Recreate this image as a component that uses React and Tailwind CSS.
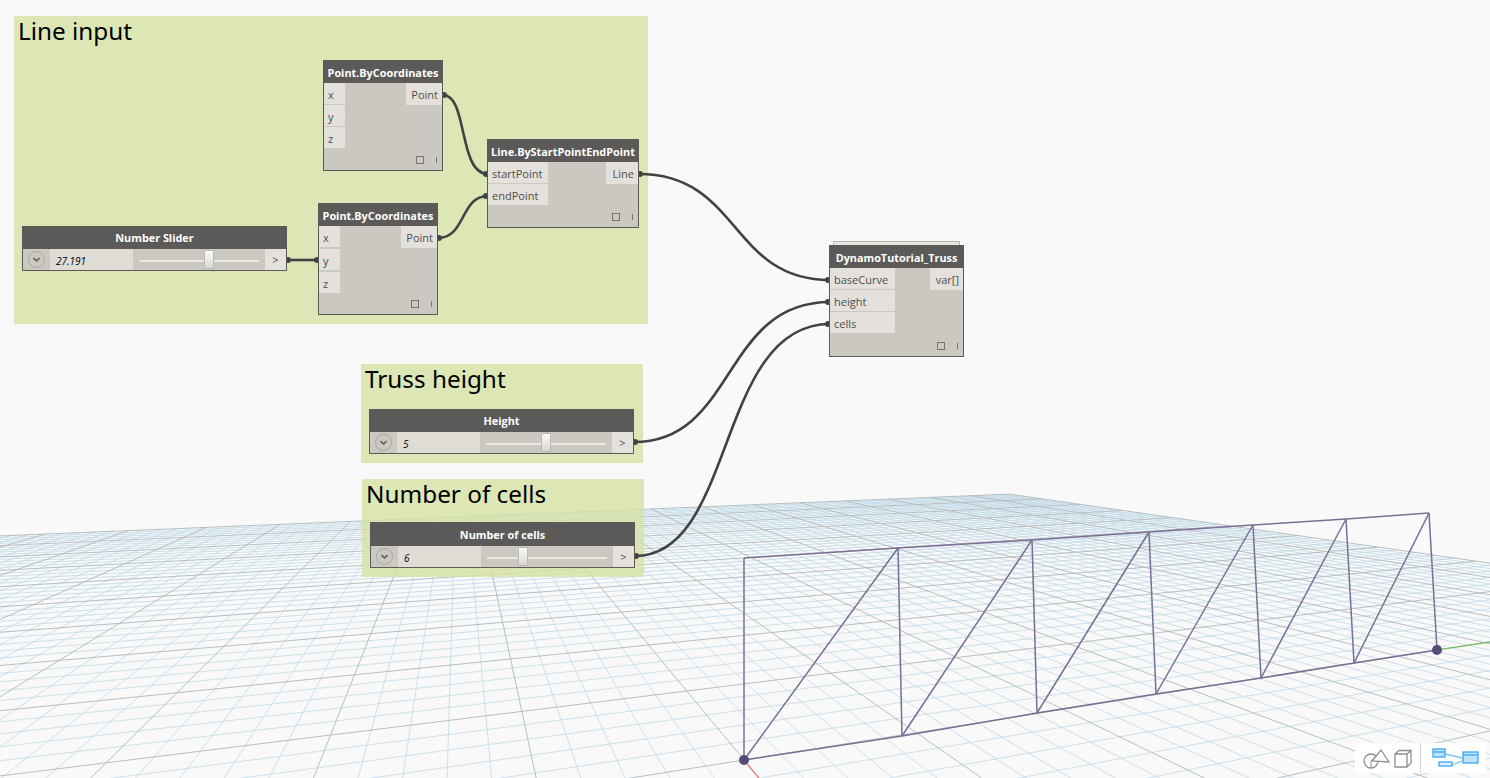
import React from 'react';

const G = 0.01721, H = 0.05, UMAX = 50, VMAX = 50;
function project(u, v) {
  const d = 1 + G * u + H * v;
  return [(G * 2918 * u + H * 458 * v + 744) / d, (G * 415 * u + H * 415 * v + 760) / d];
}
function gridLines() {
  const out = [];
  for (let k = -50; k <= 50; k++) {
    const u = k;
    const vmin = Math.max(-50, (0.04 - 1 - G * u) / H);
    if (vmin < VMAX) out.push({ a: project(u, vmin), b: project(u, VMAX), major: k % 5 === 0 });
    const v = k;
    const umin = Math.max(-50, (0.04 - 1 - H * v) / G);
    if (umin < UMAX) out.push({ a: project(umin, v), b: project(UMAX, v), major: k % 5 === 0 });
  }
  return out;
}

const bottom = [[744,760],[902,736],[1037,713],[1156,694],[1261,678],[1354,663],[1437,650]];
const top = [[744,558],[898,548],[1032,540],[1149,532],[1253,525],[1346,519],[1429,513]];

function Floor() {
  const lines = gridLines();
  const truss = [];
  bottom.forEach((p, i) => {
    truss.push([p, top[i]]);
    if (i < 6) {
      truss.push([p, bottom[i + 1]]);
      truss.push([top[i], top[i + 1]]);
      truss.push([p, top[i + 1]]);
    }
  });
  return (
    <svg className="absolute inset-0 blur-[0.45px]" width="1490" height="778" viewBox="0 0 1490 778">
      {lines.filter(l => !l.major).map((l, i) => (
        <line key={i} x1={l.a[0]} y1={l.a[1]} x2={l.b[0]} y2={l.b[1]} stroke="#c0d9e7" strokeWidth="0.8" />
      ))}
      {lines.filter(l => l.major).map((l, i) => (
        <line key={i} x1={l.a[0]} y1={l.a[1]} x2={l.b[0]} y2={l.b[1]} stroke="#aeb8bc" strokeWidth="0.9" />
      ))}
      <line x1="744" y1="760" x2="762" y2="782" stroke="#f0736f" strokeWidth="1.2" />
      <line x1="1437" y1="650" x2="1490" y2="642" stroke="#62b84f" strokeWidth="1.1" />
      {truss.map(([a, b], i) => (
        <line key={i} x1={a[0]} y1={a[1]} x2={b[0]} y2={b[1]} stroke="#7a6e94" strokeWidth="1.5" />
      ))}
      <circle cx="744" cy="760" r="5" fill="#554b78" />
      <circle cx="1437" cy="650" r="5" fill="#554b78" />
    </svg>
  );
}

function Wires() {
  const paths = [
    'M443 95 C468 95 458 174 488 174',
    'M438 238 C466 238 460 196 488 196',
    'M287 260 L319 260',
    'M639 174 C740 174 730 280 830 280',
    'M634 442 C736 442 722 302 830 302',
    'M635 556 C736 556 716 324 830 324',
  ];
  const nubs = [[444,95],[486,174],[439,238],[486,196],[288,260],[317,260],[640,174],[828,280],[828,302],[828,324],[635,442],[636,556]];
  return (
    <svg className="absolute inset-0" width="1490" height="778" viewBox="0 0 1490 778" fill="none">
      {paths.map((d, i) => <path key={i} d={d} stroke="#424242" strokeWidth="2.6" />)}
      {nubs.map(([x, y], i) => <circle key={i} cx={x} cy={y} r="3" fill="#424242" />)}
    </svg>
  );
}

function Group({ cls, titleCls, title }) {
  return (
    <div className={`absolute bg-[#d6e2a4]/80 ${cls}`}>
      <div className={`text-[24.3px] text-black font-['Noto_Sans',sans-serif] ${titleCls}`}>{title}</div>
    </div>
  );
}

function Footer() {
  return (
    <div className="mt-auto flex items-center justify-end gap-[12px] pr-[5px] pb-[6px]">
      <div className="w-[8px] h-[8px] border border-[#77736e]" />
      <div className="w-[1px] h-[6px] bg-[#77736e]" />
    </div>
  );
}

function Node({ cls, title, inputs, output, leftW, outW, gap = 'gap-[1px]' }) {
  return (
    <div className={`absolute flex flex-col bg-[#cbc7c1] border border-[#5c5a58] font-['Open_Sans',sans-serif] ${cls}`}>
      <div className="h-[22px] shrink-0 pt-[2px] bg-[#5c5a58] flex items-center justify-center text-white font-bold text-[10.85px] whitespace-nowrap">{title}</div>
      <div className="flex justify-between items-start">
        <div className={`flex flex-col ${gap} ${leftW}`}>
          {inputs.map(n => (
            <div key={n} className="h-[21px] pt-[3px] bg-[#e4e1dc] flex items-center pl-[4px] text-[11px] text-[#4d4d4d]">{n}</div>
          ))}
        </div>
        <div className={`h-[22px] pt-[2px] bg-[#e4e1dc] flex items-center justify-end pr-[4px] text-[11px] text-[#4d4d4d] ${outW}`}>{output}</div>
      </div>
      <Footer />
    </div>
  );
}

function Slider({ cls, title, value, thumbCls, headH = 'h-[22px]' }) {
  return (
    <div className={`absolute flex flex-col bg-[#cbc7c1] border border-[#5c5a58] font-['Open_Sans',sans-serif] ${cls}`}>
      <div className={`${headH} shrink-0 pt-[1px] bg-[#5c5a58] flex items-center justify-center text-white font-bold text-[10.85px]`}>{title}</div>
      <div className="flex flex-1 items-stretch">
        <div className="w-[27px] shrink-0 flex items-center justify-center">
          <div className="w-[17px] h-[17px] rounded-full border border-[#aaa6a0] flex items-center justify-center">
            <svg width="9" height="6" viewBox="0 0 9 6" fill="none"><path d="M1.5 1.2 L4.5 4 L7.5 1.2" stroke="#5c5a58" strokeWidth="1.6" /></svg>
          </div>
        </div>
        <div className="w-[83px] shrink-0 pt-[3px] bg-[#dfdcd6] flex items-center pl-[6px] text-[10px] italic text-black">{value}</div>
        <div className="relative flex-1 flex items-center px-[6px] pt-[3px]">
          <div className="h-[2px] w-full bg-[#e9e7e3]" />
          <div className={`absolute top-[1px] bottom-[1px] w-[10px] rounded-[1px] border border-[#bdb9b3] bg-gradient-to-b from-[#fbfbfb] to-[#d9d7d3] ${thumbCls}`} />
        </div>
        <div className="w-[21px] shrink-0 pt-[2px] bg-[#e4e1dc] flex items-center justify-center text-[11px] text-[#4d4d4d]">&gt;</div>
      </div>
    </div>
  );
}

function ViewToggle() {
  return (
    <div className="absolute left-[1355px] top-[743px] w-[131px] h-[30px] bg-white rounded-[2px] flex">
      <div className="w-[66px] border-r border-[#d6d6d6] flex items-center justify-center">
        <svg width="56" height="24" viewBox="0 0 56 24" fill="none" stroke="#8f8f8f" strokeWidth="1.3">
          <circle cx="11" cy="15" r="7" />
          <path d="M11 15 L18 9 M11 15 V22" strokeWidth="1" />
          <path d="M12 15 L21 4 L29 16 Z" fill="white" />
          <path d="M35 8 H47 V21 H35 Z M35 8 L39 4.5 H51 V17 L47 21 M47 8 L51 4.5" />
        </svg>
      </div>
      <div className="flex-1 flex items-center justify-center">
        <svg width="56" height="24" viewBox="0 0 56 24" fill="none" stroke="#38a7f5" strokeWidth="1.3">
          <path d="M19 8 L36 12 M26 19 L36 15" stroke="#7cc6f8" />
          <rect x="7" y="3" width="12" height="8" fill="#bfe2fb" />
          <path d="M7 6 H19" />
          <rect x="13" y="16" width="13" height="4" fill="#dff1fd" />
          <rect x="37" y="6" width="15" height="11" fill="#bfe2fb" />
          <path d="M37 9 H52" />
        </svg>
      </div>
    </div>
  );
}

export default function App() {
  return (
    <div className="relative w-[1490px] h-[778px] overflow-hidden bg-[#f9f9f9]">
      <Floor />
      <Group cls="left-[14px] top-[16px] w-[634px] h-[308px]" titleCls="pl-[4px] leading-[30px]" title="Line input" />
      <Group cls="left-[361px] top-[364px] w-[282px] h-[99px]" titleCls="pl-[4px] leading-[30px]" title="Truss height" />
      <Group cls="left-[362px] top-[479px] w-[282px] h-[98px]" titleCls="pl-[4px] leading-[29px]" title="Number of cells" />
      <Wires />
      <Node cls="left-[323px] top-[60px] w-[120px] h-[111px]" title="Point.ByCoordinates" inputs={['x', 'y', 'z']} output="Point" leftW="w-[21px]" outW="w-[36px]" />
      <Node cls="left-[318px] top-[203px] w-[120px] h-[112px]" gap="gap-[2px]" title="Point.ByCoordinates" inputs={['x', 'y', 'z']} output="Point" leftW="w-[21px]" outW="w-[36px]" />
      <Node cls="left-[487px] top-[139px] w-[152px] h-[89px]" title="Line.ByStartPointEndPoint" inputs={['startPoint', 'endPoint']} output="Line" leftW="w-[60px]" outW="w-[32px]" />
      <div className="absolute left-[833px] top-[241px] w-[127px] h-[6px] bg-[#e8e6e2] border border-[#b5b2ad]" />
      <Node cls="left-[829px] top-[245px] w-[135px] h-[112px]" title="DynamoTutorial_Truss" inputs={['baseCurve', 'height', 'cells']} output="var[]" leftW="w-[65px]" outW="w-[33px]" />
      <Slider cls="left-[22px] top-[226px] w-[265px] h-[45px]" title="Number Slider" value="27.191" thumbCls="left-[71px]" />
      <Slider cls="left-[369px] top-[409px] w-[265px] h-[45px]" title="Height" value="5" thumbCls="left-[61px]" />
      <Slider cls="left-[370px] top-[522px] w-[265px] h-[46px]" headH="h-[23px]" title="Number of cells" value="6" thumbCls="left-[37px]" />
      <ViewToggle />
    </div>
  );
}
